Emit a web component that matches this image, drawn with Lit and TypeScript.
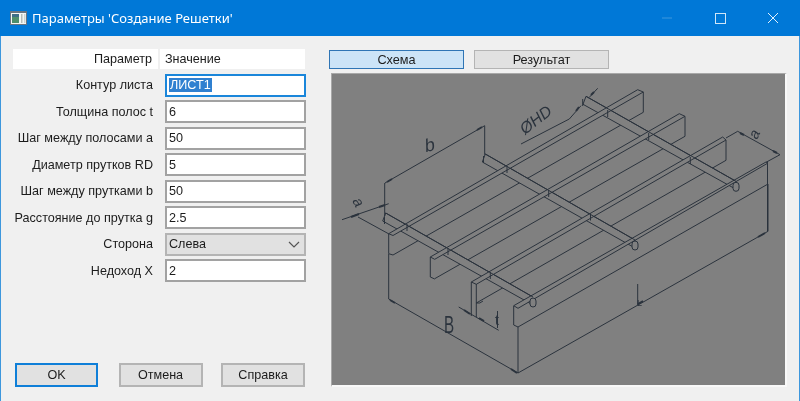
import { LitElement, html, css, svg } from 'lit';
import { customElement } from 'lit/decorators.js';

type Pt = [number, number];

const rows = [
  ['Контур листа', 'ЛИСТ1'],
  ['Толщина полос t', '6'],
  ['Шаг между полосами a', '50'],
  ['Диаметр прутков RD', '5'],
  ['Шаг между прутками b', '50'],
  ['Расстояние до прутка g', '2.5'],
  ['Сторона', 'Слева'],
  ['Недоход X', '2'],
];

// Drawing coordinates are page pixels, the svg viewBox starts at the panel corner
const bars: { o: [Pt, Pt]; i: [Pt, Pt]; l: [Pt, Pt] }[] = [
  { o: [[387.7, 234.7], [636.7, 90.7]], i: [[392, 236.5], [642.3, 93]], l: [[392, 256], [642.3, 113.3]] },
  { o: [[429.3, 258], [678.3, 114.7]], i: [[433.7, 260.3], [684, 117.3]], l: [[433.7, 279.7], [684, 137.3]] },
  { o: [[470.3, 283], [721.7, 138]], i: [[475.3, 285.3], [725, 141]], l: [[475.3, 304], [725, 161.3]] },
  { o: [[512.7, 306.7], [765, 163]], i: [[517, 309.3], [767, 164]], l: [[517, 328], [767, 185]] },
];

const rods: [Pt, Pt][] = [
  [[585, 97.3], [735, 182.3]],
  [[484.3, 155], [634, 241]],
  [[384.7, 214], [532, 298]],
];

const ticks: Pt[] = [
  [606.7, 111], [647.7, 134], [689.3, 158],
  [506, 167], [547.7, 191], [589.5, 214.5],
  [406, 225], [447, 249], [489.3, 273],
  [581.7, 100], [482.5, 157], [383.5, 218],
];

const dims: string[] = [
  'M384 184L483.7 126.7M383.7 184V217M483.7 126.7V155.7',
  'M520 145L568.3 120L580 106.7M588.3 98.3L596.7 89.3',
  'M725 139L736.7 132.3L779 155.7L765 163.3',
  'M341 220.7L387.7 204.7M357 218L388 235',
  'M387.7 255V300L517 374L767 232.3V185',
  'M517 328V374',
  'M457.7 308L497.7 331.3M496.5 312V329',
  'M636.7 285V306',
  'M429.3 258V278L433.7 280M387.7 235V254.7L392 256M470.3 283V317M475.3 285V318M512.7 307V326L517 328',
  'M475.3 304Q479 305 482 302',
];

const arrows: string[] = [
  'M386 183L391 180', 'M476 131L481 128', 'M350 218L358 215', 'M378 208L384 206',
  'M389 301L394 304', 'M510 370L516 374', 'M463 311L469 315', 'M478 319L483 322',
  'M757 238L764 234', 'M637 305L642 302', 'M739 134L743 136', 'M772 152L776 154',
  'M575 112L578 108', 'M590 96L593 93',
];

const line = (a: Pt, b: Pt) => `M${a[0]} ${a[1]}L${b[0]} ${b[1]}`;

@customElement('app-root')
export class AppRoot extends LitElement {
  static styles = css`
    :host {
      display: block;
      width: 800px;
      height: 401px;
      overflow: hidden;
      font-family: 'Liberation Sans', sans-serif;
      color: #1c1c1c;
    }
    .window {
      display: flex;
      flex-direction: column;
      height: 401px;
      box-sizing: border-box;
      background: #f0f0f0;
      border-left: 1px solid #3d97dd;
      border-right: 1px solid #3d97dd;
    }
    .titlebar {
      display: flex;
      align-items: center;
      flex: none;
      height: 36px;
      margin: 0 -1px;
      background: #0078d7;
      color: #fff;
    }
    .app-icon {
      margin-left: 10px;
      flex: none;
    }
    .title {
      margin-left: 5px;
      font: 13px 'Noto Sans', sans-serif;
      flex: 1;
      filter: blur(0.25px);
    }
    .controls {
      display: flex;
      flex: none;
    }
    .ctl {
      display: block;
      width: 53px;
      height: 36px;
    }
    .body {
      display: flex;
      flex: 1;
      min-height: 0;
    }
    .left {
      display: flex;
      flex-direction: column;
      width: 305px;
      padding: 13px 0 13px 12px;
      box-sizing: border-box;
      font-size: 12.6px;
      filter: blur(0.25px);
    }
    .head {
      display: grid;
      grid-template-columns: 145px 145px;
      column-gap: 2px;
      height: 20px;
      line-height: 20px;
      margin-bottom: 4.6px;
    }
    .head div {
      background: #fff;
    }
    .head .p {
      text-align: right;
      padding-right: 6px;
    }
    .head .v {
      padding-left: 5px;
    }
    .grid {
      display: grid;
      grid-template-columns: 141px 141px;
      column-gap: 11px;
      row-gap: 3.5px;
      grid-auto-rows: 23px;
      align-items: center;
    }
    .lbl {
      text-align: right;
      white-space: nowrap;
      padding-right: 1px;
    }
    .field {
      display: flex;
      align-items: center;
      height: 23px;
      box-sizing: border-box;
      background: #fff;
      border: 2px solid #a2a2a2;
      padding-left: 2px;
    }
    .field.focus {
      border-color: #1a86da;
    }
    .sel-text {
      background: #2f80d0;
      color: #fff;
      padding: 0 1px;
    }
    .field.combo {
      background: #e1e1e1;
      border-color: #b4b4b4;
      justify-content: space-between;
      padding-right: 4px;
    }
    .actions {
      display: flex;
      justify-content: space-between;
      margin-top: auto;
      margin-left: 2px;
      margin-right: 1px;
      margin-bottom: 1px;
    }
    .btn {
      display: flex;
      align-items: center;
      justify-content: center;
      box-sizing: border-box;
      width: 84px;
      height: 24px;
      background: #e1e1e1;
      border: 2px solid #b4b4b4;
    }
    .btn.default {
      width: 83px;
      margin-right: 2px;
      border-color: #0f7fd8;
    }
    .right {
      display: flex;
      flex-direction: column;
      margin-left: 23px;
      padding-top: 14px;
      font-size: 12.7px;
      filter: blur(0.2px);
    }
    .tabs {
      display: flex;
      gap: 10px;
      margin-bottom: 4px;
    }
    .tab {
      width: 135px;
      height: 19px;
      box-sizing: border-box;
      display: flex;
      align-items: center;
      justify-content: center;
      background: #e1e1e1;
      border: 1.5px solid #b4b4b4;
    }
    .tab.on {
      background: #cce4f7;
      border-color: #2f75b5;
    }
    .panel {
      width: 456px;
      height: 314px;
      margin-left: 2px;
      box-sizing: border-box;
      border-top: 1px solid #a8a8a8;
      border-left: 1px solid #a8a8a8;
      border-right: 2px solid #f8f8f8;
      border-bottom: 2px solid #f8f8f8;
      background: #808080;
    }
    .panel svg {
      display: block;
    }
    .panel text {
      font-family: 'Liberation Sans', sans-serif;
      fill: #2b333d;
      font-style: italic;
    }
    .panel text.upright {
      font-style: normal;
    }
  `;

  private drawing() {
    const ink = '#2b333d';
    const bg = '#808080';
    return svg`
      <g fill="none" stroke=${ink} stroke-width="1">
        ${bars.map((b) => svg`<path d=${line(b.l[0], b.l[1])} />`)}
        ${bars.slice(0, 3).map((b) => svg`<path d=${line(b.i[1], b.l[1])} />`)}
        <path d="M766.5 163V232" />
        ${rods.map(([a, b]) => svg`<path fill=${bg} d="M${a[0]} ${a[1]}L${b[0]} ${b[1]}L${b[0]} ${b[1] + 8}L${a[0] - 3} ${a[1] + 8}Z" />`)}
        ${bars.map((b) => svg`<path fill=${bg} d="M${b.o[0][0]} ${b.o[0][1]}L${b.o[1][0]} ${b.o[1][1]}L${b.i[1][0]} ${b.i[1][1]}L${b.i[0][0]} ${b.i[0][1]}Z" />`)}
        ${rods.map(([a, b]) => svg`<path d=${line(a, b)} />`)}
        ${ticks.map(([x, y]) => svg`<path d="M${x} ${y}v7" />`)}
        ${rods.map(([, b]) => svg`<rect x=${b[0] - 3} y=${b[1] + 1} width="6" height="9" rx="3" fill=${bg} />`)}
        ${dims.map((d) => svg`<path d=${d} />`)}
        ${arrows.map((d) => svg`<path d=${d} stroke-width="2" />`)}
      </g>
      <text transform="translate(425 153) rotate(-12)" font-size="18">b</text>
      <text transform="translate(524 136) rotate(-38)" font-size="16">ØHD</text>
      <text transform="translate(756 141) rotate(-65)" font-size="15">a</text>
      <text transform="translate(351 202) rotate(60)" font-size="15">a</text>
      <text class="upright" transform="translate(443 334) scale(0.8 1.3)" font-size="19">B</text>
      <text class="upright" x="494" y="326" font-size="14">t</text>
      <text class="upright" x="636" y="307" font-size="9">L</text>
    `;
  }

  render() {
    return html`
      <div class="window">
        <div class="titlebar">
          <svg class="app-icon" width="17" height="14" viewBox="0 0 17 14">
            <rect width="17" height="14" fill="#f4f6f4" />
            <rect x="0.5" y="0.5" width="16" height="13" fill="none" stroke="#6a7580" />
            <rect x="0" y="0" width="17" height="2" fill="#6a7580" />
            <rect x="2" y="3" width="7" height="9" fill="#4f8f6c" />
            <rect x="2" y="3" width="7" height="3" fill="#3f6f88" />
            <rect x="11" y="3" width="1.5" height="9" fill="#b7bdb7" />
            <rect x="14" y="3" width="1.5" height="9" fill="#cfd4cf" />
          </svg>
          <span class="title">Параметры 'Создание Решетки'</span>
          <div class="controls">
            <svg class="ctl" viewBox="0 0 53 36"><path d="M21 18H31" stroke="#3d97dd" fill="none" /></svg>
            <svg class="ctl" viewBox="0 0 53 36"><rect x="21.5" y="13.5" width="10" height="10" fill="none" stroke="#cfe6f8" /></svg>
            <svg class="ctl" viewBox="0 0 53 36"><path d="M21 13L31 23M31 13L21 23" fill="none" stroke="#e2f0fb" /></svg>
          </div>
        </div>
        <div class="body">
          <div class="left">
            <div class="head"><div class="p">Параметр</div><div class="v">Значение</div></div>
            <div class="grid">
              ${rows.map(([label, value], i) => html`
                <div class="lbl">${label}</div>
                ${i === 0
                  ? html`<div class="field focus"><span class="sel-text">${value}</span></div>`
                  : i === 6
                    ? html`<div class="field combo"><span>${value}</span>
                        <svg width="12" height="7" viewBox="0 0 12 7"><path d="M1 1L6 6L11 1" fill="none" stroke="#555" stroke-width="1.2" /></svg></div>`
                    : html`<div class="field">${value}</div>`}
              `)}
            </div>
            <div class="actions">
              <div class="btn default">OK</div>
              <div class="btn">Отмена</div>
              <div class="btn">Справка</div>
            </div>
          </div>
          <div class="right">
            <div class="tabs">
              <div class="tab on">Схема</div>
              <div class="tab">Результат</div>
            </div>
            <div class="panel">
              <svg width="453" height="311" viewBox="331 75 453 311">${this.drawing()}</svg>
            </div>
          </div>
        </div>
      </div>
    `;
  }
}
